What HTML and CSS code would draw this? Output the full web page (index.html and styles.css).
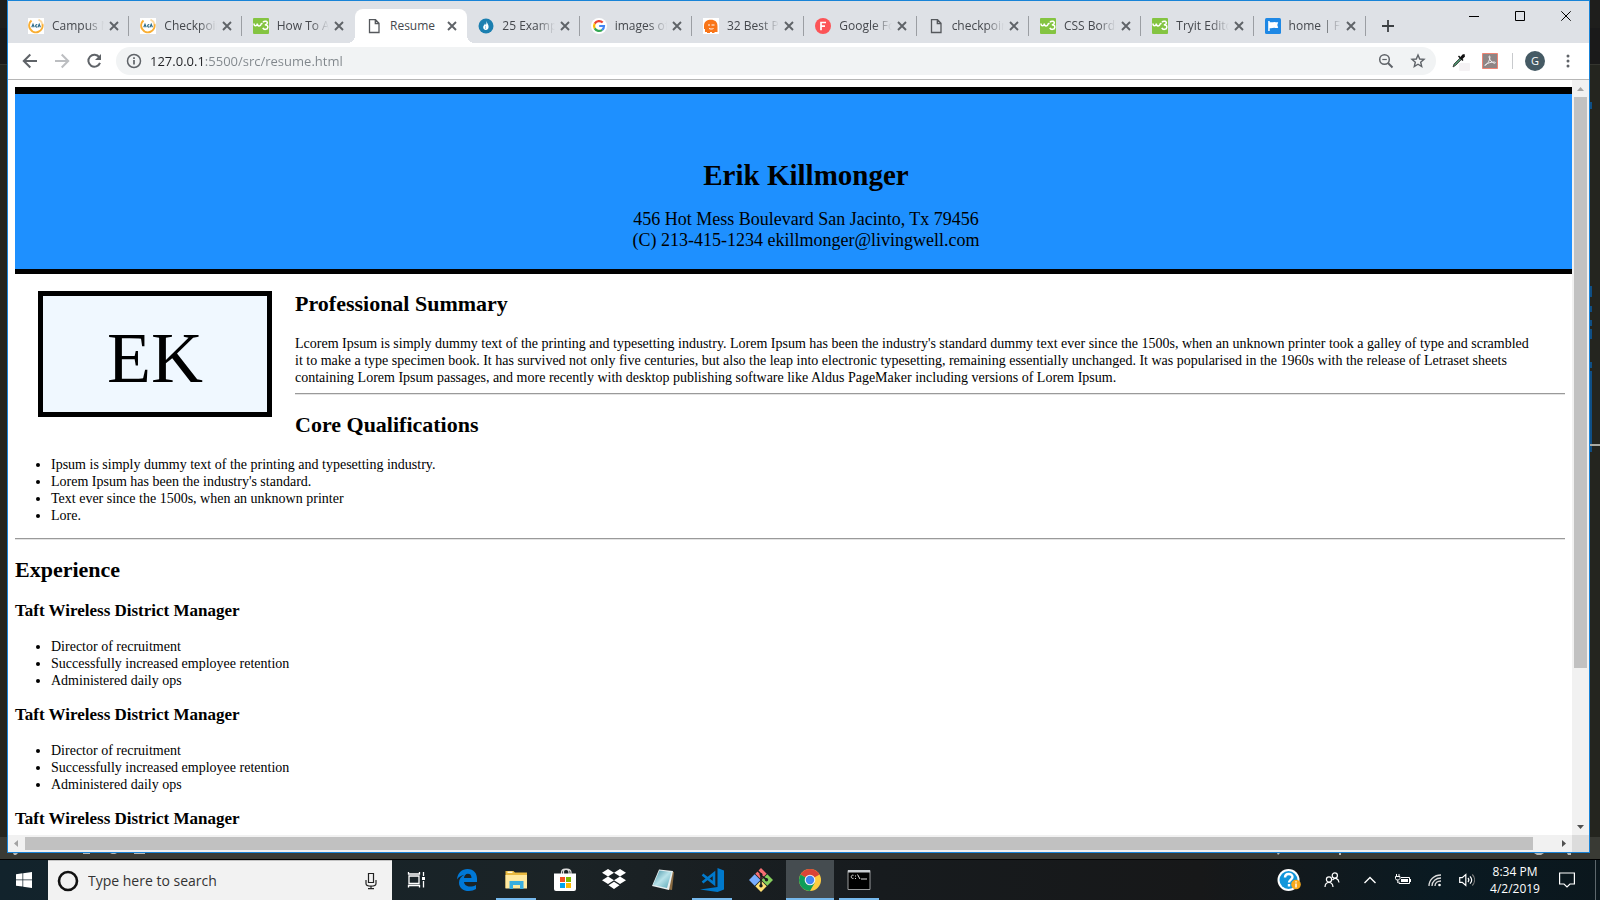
FILE: index.html
```html
<!DOCTYPE html>
<html lang="en">
<head>
<meta charset="utf-8">
<title>Resume</title>
<link rel="stylesheet" href="styles.css">
</head>
<body>
<svg class="defs" aria-hidden="true">
  <symbol id="x" viewBox="0 0 10 10"><path d="M1 1l8 8M9 1l-8 8" stroke="#5f6368" stroke-width="1.9"/></symbol>
  <symbol id="doc" viewBox="0 0 16 16"><path d="M3.5 1.7h6l3.5 3.6v9.2h-9.500zM9.300 1.700v3.800h3.700" fill="none" stroke="#55585c" stroke-width="1.300"/></symbol>
  <symbol id="aca" viewBox="0 0 16 16"><path d="M0 0h16v16H0z" fill="#fff"/><path d="M3.500 2.500a6.700 6.700 0 1 0 10.900 3.500" fill="none" stroke="#f9ae33" stroke-width="2"/><path d="M10.500 1.700a6.700 6.700 0 0 1 3.900 4.500" fill="none" stroke="#fcd9a0" stroke-width="1.800"/><path d="M3.800 9.300l1.200-3 1.200 3M9.300 6.700c-2.200-.7-2.200 3 0 2.300M10 9.300l1.200-3 1.200 3" fill="none" stroke="#2b6c8a" stroke-width="1.200"/></symbol>
  <symbol id="w3" viewBox="0 0 16 16"><rect width="16" height="16" rx="1" fill="#84c441"/><path d="M1 5.500c0 3 3 3 3.300 0 0 3 3.300 3.300 4 .2l1.200-.5M10 4.300c1.500-2 4.800-1 4.300.9-.2 1.300-1.500 1.500-2.500 1.500 2 0 3.200.8 3 2.600-.3 2.500-4 2.800-5 .6" fill="none" stroke="#fff" stroke-width="1.500"/></symbol>
</svg>
<div class="desktop">
  <i class="mark m1"></i><i class="mark m2"></i><i class="mark m3"></i><i class="rule"></i>
  <div class="window">
    <div class="strip">
      <nav class="tabs">
        <div class="tab"><svg class="fav"><use href="#aca"/></svg><a href="#">Campus Ma</a><button aria-label="Close"><svg><use href="#x"/></svg></button></div>
        <div class="tab"><svg class="fav"><use href="#aca"/></svg><a href="#">Checkpoint</a><button aria-label="Close"><svg><use href="#x"/></svg></button></div>
        <div class="tab bare"><svg class="fav"><use href="#w3"/></svg><a href="#">How To Add</a><button aria-label="Close"><svg><use href="#x"/></svg></button></div>
        <div class="tab active"><svg class="fav"><use href="#doc"/></svg><a href="#">Resume</a><button aria-label="Close"><svg><use href="#x"/></svg></button></div>
        <div class="tab"><svg class="fav" viewBox="0 0 16 16"><circle cx="8" cy="8" r="7.500" fill="#1b7fb0"/><path d="M8.300 2.800c.3 2.200 2.500 3.800 2.300 6.200-.1 1.800-1.300 3-2.700 3-1.700 0-2.800-1.200-2.700-2.900.1-1.500 1.500-2 1.700-3.500.8.500.9 1.300.8 2 .8-1.400.9-3 .6-4.800z" fill="#fff"/><path d="M7.500 8v3" stroke="#9fd0e8"/></svg><a href="#">25 Examples</a><button aria-label="Close"><svg><use href="#x"/></svg></button></div>
        <div class="tab"><svg class="fav" viewBox="0 0 16 16"><circle cx="8" cy="8" r="8" fill="#fff"/><g fill="none" stroke-width="2.200"><path d="M11.700 4.600A5 5 0 0 0 3.700 5.600" stroke="#ea4335"/><path d="M3.700 5.600a5 5 0 0 0 0 4.800" stroke="#fbbc05"/><path d="M3.700 10.400a5 5 0 0 0 7.500 1.400" stroke="#34a853"/><path d="M11.200 11.800A5 5 0 0 0 13 8H8.200" stroke="#4285f4"/></g></svg><a href="#">images of</a><button aria-label="Close"><svg><use href="#x"/></svg></button></div>
        <div class="tab"><svg class="fav" viewBox="0 0 16 16"><path d="M0 0h16v16H0z" fill="#fff"/><path d="M1 8C1 3.500 4 1.800 8 1.800S14.500 4 14.500 8v6h-3v1H9v-1H7v1H4v-1H2v-3H1z" fill="#f97518"/><path d="M5 7h2M8.500 7h3M6 10.500c1.500.7 3 .7 4.500 0" stroke="#fff" fill="none"/></svg><a href="#">32 Best Po</a><button aria-label="Close"><svg><use href="#x"/></svg></button></div>
        <div class="tab"><svg class="fav" viewBox="0 0 16 16"><circle cx="8" cy="8" r="8" fill="#fc5457"/><path d="M6 12.200V4.500h5M6 8.200h4" fill="none" stroke="#fff" stroke-width="1.700"/></svg><a href="#">Google Fo</a><button aria-label="Close"><svg><use href="#x"/></svg></button></div>
        <div class="tab"><svg class="fav"><use href="#doc"/></svg><a href="#">checkpoint</a><button aria-label="Close"><svg><use href="#x"/></svg></button></div>
        <div class="tab"><svg class="fav"><use href="#w3"/></svg><a href="#">CSS Border</a><button aria-label="Close"><svg><use href="#x"/></svg></button></div>
        <div class="tab"><svg class="fav"><use href="#w3"/></svg><a href="#">Tryit Editor</a><button aria-label="Close"><svg><use href="#x"/></svg></button></div>
        <div class="tab"><svg class="fav" viewBox="0 0 16 16"><rect width="16" height="16" rx="1.500" fill="#1e88e5"/><path d="M3.200 3h1.500v10H3.200zM4.500 4c2 .8 3.500 0 5 0 1.300 0 2.200.5 3.700.2L12.300 7l.9 2.800c-2 .6-2.500 0-4 0s-2.700.7-4.700.2z" fill="#fff"/></svg><a href="#">home | Font</a><button aria-label="Close"><svg><use href="#x"/></svg></button></div>
      </nav>
      <button class="plus" aria-label="New tab"><svg viewBox="0 0 12 12" width="12" height="12"><path d="M6 0v12M0 6h12" stroke="#3c4043" stroke-width="1.800"/></svg></button>
      <div class="controls">
        <button aria-label="Minimize"><svg viewBox="0 0 10 10"><path d="M0 5.500h10" stroke="#000"/></svg></button>
        <button aria-label="Maximize"><svg viewBox="0 0 10 10"><path d="M.5 .5h9v9h-9z" fill="none" stroke="#000"/></svg></button>
        <button aria-label="Close window"><svg viewBox="0 0 10 10"><path d="M.3 .3l9.400 9.400M9.700 .3L.3 9.700" stroke="#000"/></svg></button>
      </div>
    </div>
    <div class="toolbar">
      <button class="nav" aria-label="Back"><svg viewBox="0 0 16 16"><path d="M15 8H2.500M8.300 1.500L1.800 8l6.500 6.500" fill="none" stroke="#5f6368" stroke-width="2"/></svg></button>
      <button class="nav" aria-label="Forward"><svg viewBox="0 0 16 16"><path d="M1 8h12.500M7.700 1.500L14.200 8l-6.500 6.500" fill="none" stroke="#bcbec1" stroke-width="2"/></svg></button>
      <button class="nav" aria-label="Reload"><svg viewBox="0 0 16 16"><path d="M13.300 4.300A6 6 0 1 0 14 9.800" fill="none" stroke="#5f6368" stroke-width="2"/><path d="M15 1v6H9z" fill="#5f6368"/></svg></button>
      <div class="omnibox">
        <svg viewBox="0 0 16 16"><circle cx="8" cy="8" r="6.500" fill="none" stroke="#5f6368" stroke-width="1.500"/><path d="M8 7v4.500M8 4.300V6" stroke="#5f6368" stroke-width="1.700"/></svg>
        <input type="text" aria-label="Address" value="127.0.0.1:5500/src/resume.html">
        <button aria-label="Zoom"><svg viewBox="0 0 16 16"><circle cx="6.500" cy="6.500" r="4.800" fill="none" stroke="#5f6368" stroke-width="1.500"/><path d="M10 10l4.500 4.500" stroke="#5f6368" stroke-width="1.900"/><path d="M4.300 6.500h4.500" stroke="#5f6368" stroke-width="1.200"/></svg></button>
        <button aria-label="Bookmark"><svg viewBox="0 0 16 16"><path d="M8 2l1.700 4 4.300.4-3.300 2.800 1 4.300L8 11.200l-3.700 2.300 1-4.300L2 6.400 6.300 6z" fill="none" stroke="#5f6368" stroke-width="1.400"/></svg></button>
      </div>
      <button class="ext" aria-label="Color picker"><svg viewBox="0 0 20 20"><rect x="9" y="12" width="11" height="8" rx="1" fill="#f5f2f4"/><path d="M3 16l1-3 6-6 1.500 1.500-6 6z" fill="#4c8f6b" stroke="#333" stroke-width=".8"/><path d="M8.500 5l4.500 4.500" stroke="#111" stroke-width="1.500"/><path d="M10 6.500l2.500-3 2-.5.500 2.500-3 3z" fill="#111"/></svg></button>
      <button class="ext" aria-label="Acrobat"><svg viewBox="0 0 16 16"><path d="M.5 .5h15v15H.5z" fill="#8e8585" stroke="#ee8473"/><path d="M3 12.500c2-.8 4.700-4.500 5-8.500 0-1.500-1.300-1.200-1 0 .5 3 3 5.700 5.500 6.300 1.200 0 1.200-1.200 0-1.300-3 0-6.500.8-9 2.500-.7.500-1 .9-.5 1z" fill="none" stroke="#eee"/></svg></button>
      <span class="sep"></span>
      <button class="avatar" aria-label="Profile">G</button>
      <button class="dots" aria-label="Menu"><svg viewBox="0 0 4 14"><circle cx="2" cy="2" r="1.500"/><circle cx="2" cy="7" r="1.500"/><circle cx="2" cy="12" r="1.500"/></svg></button>
    </div>
    <div class="view">
      <div class="page">
        <header class="head">
          <h1>Erik Killmonger</h1>
          <p>456 Hot Mess Boulevard San Jacinto, Tx 79456<br>(C) 213-415-1234 ekillmonger@livingwell.com</p>
        </header>
        <main class="resume">
          <div class="mono">EK</div>
          <h2>Professional Summary</h2>
          <p>Lcorem Ipsum is simply dummy text of the printing and typesetting industry. Lorem Ipsum has been the industry's standard dummy text ever since the 1500s, when an unknown printer took a galley of type and scrambled<br> it to make a type specimen book. It has survived not only five centuries, but also the leap into electronic typesetting, remaining essentially unchanged. It was popularised in the 1960s with the release of Letraset sheets<br> containing Lorem Ipsum passages, and more recently with desktop publishing software like Aldus PageMaker including versions of Lorem Ipsum.</p>
          <hr>
          <h2>Core Qualifications</h2>
          <ul class="core">
            <li>Ipsum is simply dummy text of the printing and typesetting industry.</li>
            <li>Lorem Ipsum has been the industry's standard.</li>
            <li>Text ever since the 1500s, when an unknown printer</li>
            <li>Lore.</li>
          </ul>
          <hr>
          <h2>Experience</h2>
          <h3>Taft Wireless District Manager</h3>
          <ul><li>Director of recruitment</li><li>Successfully increased employee retention</li><li>Administered daily ops</li></ul>
          <h3>Taft Wireless District Manager</h3>
          <ul><li>Director of recruitment</li><li>Successfully increased employee retention</li><li>Administered daily ops</li></ul>
          <h3>Taft Wireless District Manager</h3>
        </main>
      </div>
      <div class="vbar"><svg viewBox="0 0 17 17"><path d="M5 11l3.500-4 3.500 4z" fill="#a3a3a3"/></svg><i></i><svg viewBox="0 0 17 17"><path d="M5 7h7l-3.500 4z" fill="#505050"/></svg></div>
      <div class="hbar"><svg viewBox="0 0 17 17"><path d="M10 5v7L6 8.500z" fill="#a3a3a3"/></svg><i></i><svg viewBox="0 0 17 17"><path d="M7 5v7l4-3.500z" fill="#505050"/></svg></div>
      <div class="corner"></div>
    </div>
  </div>
  <svg class="peek" viewBox="0 0 160 2"><g fill="#b8b9b5"><path d="M13 0h5l-2 2h-2zM83 0h7v1h-7zM110 0h7l-2 1h-3zM134 0h11v1h-11z"/></g></svg>
  <svg class="peek right" viewBox="0 0 330 2"><g fill="#b8b9b5"><path d="M7 0h3l-2 2zM69 0h2v2h-2zM264 0h10l-3 2h-4zM297 0h4v2h-3z"/></g></svg>
</div>
<footer class="taskbar">
  <button class="start" aria-label="Start"><svg viewBox="0 0 16 16"><path d="M0 2.200l6.500-.9v6.200H0zM7.200 1.200L16 0v7.500H7.200zM0 8.300h6.500v6.300L0 13.700zM7.200 8.300H16V16l-8.800-1.200z" fill="#fff"/></svg></button>
  <div class="search">
    <svg viewBox="0 0 22 22" width="22" height="22"><circle cx="11" cy="11" r="9" fill="none" stroke="#111" stroke-width="2.600"/></svg>
    <input type="text" aria-label="Search" placeholder="Type here to search">
    <svg viewBox="0 0 12 18" width="12" height="18"><path d="M3.500 1.500h5v9h-5zM1 8v3.500c0 3.500 10 3.500 10 0V8M6 14v2.500M3 16.700h6" fill="none" stroke="#222" stroke-width="1.200"/></svg>
  </div>
  <div class="apps">
    <button class="tv" aria-label="Task view"><svg viewBox="0 0 24 24" fill="none" stroke="#fff" stroke-width="1.300"><path d="M4 8h10v7.500H4zM3.500 4v2h11V4M3.500 19.500v-2h11v2M18.500 4v4M18.500 13v6.500"/><path d="M17 9h3v3h-3z" fill="#fff" stroke="none"/></svg></button>
    <button aria-label="Edge"><svg viewBox="0 0 24 24"><path d="M2 11.500C2.500 5 7 1 12.500 1 19 1 22 5.500 22 10.500V14H9c.3 3 3 4.500 6 4.500 2.300 0 4.200-.6 6-1.600v4.200c-2 1.200-4.300 1.900-7 1.900C8 23 4 19.500 4 14.700c0-3.400 2-6.400 5.300-7.900C6 7.500 3.600 9 2 11.500zM9 10h7.500c0-2.700-1.300-4.200-3.600-4.200C10.700 5.800 9.300 7.600 9 10z" fill="#0078d7"/></svg></button>
    <button class="open" aria-label="File Explorer"><svg viewBox="0 0 24 24"><path d="M1.500 3h8l1.500 1.500h12V20h-21.500z" fill="#e9b93f"/><path d="M1.500 7h21.500v13.500H1.500z" fill="#ffe9a0"/><path d="M3.500 3.500h5V5h-5z" fill="#fff5d0"/><path d="M5.500 21v-8h14v8h-3.500v-4H9v4z" fill="#3aaee0"/></svg></button>
    <button aria-label="Store"><svg viewBox="0 0 24 24"><path d="M8.500 6V4.500C8.500 0 16 0 16 4.500V6M10.500 6V3.500c0-3.300 7-3.300 7.500.5V6" fill="none" stroke="#ddd" stroke-width="1.200"/><path d="M1 5.500h22V21a2 2 0 0 1-2 2H3a2 2 0 0 1-2-2z" fill="#fff"/><path d="M7 9h5v5H7z" fill="#f25022"/><path d="M13 9h5v5h-5z" fill="#7fba00"/><path d="M7 15h5v5H7z" fill="#00a4ef"/><path d="M13 15h5v5h-5z" fill="#ffb900"/></svg></button>
    <button aria-label="Dropbox"><svg viewBox="0 0 24 24"><path d="M6 1l6 3.700-6 3.700L0 4.700zM18 1l6 3.700-6 3.700-6-3.700zM6 8.500l6 3.700-6 3.700-6-3.700zM18 8.500l6 3.700-6 3.700-6-3.700zM12 13.800l5.500 3.400-5.500 3.800-5.500-3.800z" fill="#fff"/></svg></button>
    <button aria-label="Notepad"><svg viewBox="0 0 24 24"><defs><linearGradient id="np" x1="0" y1="0" x2="1" y2="1"><stop offset="0" stop-color="#3f8da0"/><stop offset=".5" stop-color="#b9e3ea"/><stop offset="1" stop-color="#54a3b3"/></linearGradient></defs><path d="M19 3l4 1-2 18-7-1z" fill="#8a6b42"/><path d="M8 1.500L22 3l-4 19L1 18z" fill="#e9eff0"/><path d="M8.500 2.500L20.500 4l-4.500 16L2 17z" fill="url(#np)"/></svg></button>
    <button class="open" aria-label="VS Code"><svg viewBox="0 0 24 24"><path d="M17.500 0L24 2.500v19L17.500 24 0 21.500l17.500-2.400z" fill="#0079cc"/><path d="M2.500 6.500l11.500 9V5.500l-11.500 9" fill="none" stroke="#0079cc" stroke-width="2.600"/></svg></button>
    <button aria-label="Git"><svg viewBox="0 0 24 24"><path d="M12 0l5.700 5.700L12 11.400 6.300 5.700z" fill="#f76f72"/><path d="M18.300 6.300L24 12l-5.700 5.700-5.700-5.700z" fill="#86cf5d"/><path d="M12 12.600l5.700 5.700L12 24l-5.700-5.700z" fill="#ffe074"/><path d="M5.700 6.300l5.700 5.700-5.700 5.700L0 12z" fill="#78adff"/><path d="M8.500 2.500L12 6v12M12 7.500l5.500 4" stroke="#191c1e" stroke-width="1.600" fill="none"/><g fill="#191c1e"><circle cx="12" cy="6.500" r="1.500"/><circle cx="17.500" cy="11.700" r="1.700"/><circle cx="12" cy="17.800" r="1.700"/></g></svg></button>
    <button class="current" aria-label="Chrome"><svg viewBox="0 0 24 24"><circle cx="12" cy="12" r="11" fill="#ffcd40"/><path d="M12 12L2.500 6.500a11 11 0 0 1 19 0z" fill="#db4437"/><path d="M2.500 6.500L12 12l4.700 2.800L12 23A11 11 0 0 1 2.500 6.500z" fill="#0f9d58"/><circle cx="12" cy="12" r="5.300" fill="#f3f3f3"/><circle cx="12" cy="12" r="4.200" fill="#4285f4"/></svg></button>
    <button class="open" aria-label="Command Prompt"><svg viewBox="0 0 24 24"><path d="M1 2.500h22v19H1z" fill="#000" stroke="#9a9c9d"/><path d="M1 2h22v2.500H1z" fill="#c9cdd1"/><path d="M6.500 7.300c-3-1-3 4 0 3M8.500 7.500v1M8.500 10v1M10.500 6.500l2.500 4.500M14 11h6" stroke="#ddd" fill="none"/></svg></button>
  </div>
  <div class="tray">
    <button class="help" aria-label="Help"><svg viewBox="0 0 24 24"><circle cx="11.500" cy="12" r="11" fill="#fff"/><circle cx="11.500" cy="12" r="9" fill="#1296db"/><path d="M8 9.500c0-4.500 7.500-4.500 7.500-.5 0 2.500-3.500 2.700-3.500 5.500M12 16v2.500" fill="none" stroke="#fff" stroke-width="2.400"/><circle cx="19" cy="16.500" r="4.800" fill="#f7a81b"/><path d="M19 13.300v1.300M19 15.500v4" stroke="#fff" stroke-width="1.400"/></svg></button>
    <button class="people" aria-label="People"><svg viewBox="0 0 16 16" fill="none" stroke="#fff" stroke-width="1.200"><circle cx="5" cy="7.500" r="2.600"/><path d="M1 15c.3-6 7.500-6 8 0"/><circle cx="10.800" cy="3.500" r="2.600"/><path d="M8.500 8c2.500-3 6-1.500 6.500 2.500"/></svg></button>
    <button class="up" aria-label="Show hidden icons"><svg viewBox="0 0 16 16"><path d="M2.500 11L8 5.500l5.500 5.500" fill="none" stroke="#fff" stroke-width="1.400"/></svg></button>
    <button aria-label="Battery"><svg viewBox="0 0 16 16"><path d="M6 5.500h8.500v6H4V9.500" fill="none" stroke="#fff"/><path d="M6 7h7v3H6zM15 7h1v3h-1z" fill="#fff"/><path d="M1.500 2v2M4 2v2M.5 4.500h4.500v2L3.500 8h-2L.5 6.500zM2.800 8v3" fill="none" stroke="#fff"/></svg></button>
    <button aria-label="Wi-Fi"><svg viewBox="0 0 16 16" fill="none" stroke="#ddd" stroke-width="1.300"><path d="M2 14C2 8 7 3 14 3M5 14c0-4.500 4-8 9-8M8 14c0-3 2.500-5 6-5"/><circle cx="12.500" cy="13" r="1.300" fill="#fff" stroke="none"/></svg></button>
    <button aria-label="Volume"><svg viewBox="0 0 16 16" fill="none" stroke="#fff" stroke-width="1.200"><path d="M.7 5.700h2.500l3.600-3.200v11L3.200 10.300H.7zM9 6c1 1.200 1 2.800 0 4M11 4.300c2 2.200 2 5.200 0 7.400"/><path d="M13.300 2.500c3 3.300 3 7.700 0 11" stroke="#777"/></svg></button>
    <div class="clock"><span>8:34 PM</span><span>4/2/2019</span></div>
    <button class="note" aria-label="Notifications"><svg viewBox="0 0 16 16"><path d="M.6 1h14.800v11H11l-3 3-3-3H.6z" fill="none" stroke="#fff" stroke-width="1.200"/></svg></button>
    <span class="show"></span>
  </div>
</footer>
</body>
</html>
```

FILE: styles.css
```css
* { box-sizing: border-box; }
body { margin: 0; height: 100vh; display: flex; flex-direction: column; overflow: hidden; font-family: "Open Sans", "Noto Sans", sans-serif; }
button { border: 0; padding: 0; background: none; display: flex; align-items: center; justify-content: center; font: inherit; flex: none; }
input { border: 0; padding: 0; outline: 0; background: none; font: inherit; min-width: 0; }
a { color: inherit; text-decoration: none; }
svg { display: block; flex: none; }
.defs { position: absolute; width: 0; height: 0; }

/* desktop behind the browser */
.desktop { position: relative; flex: 1; min-height: 0; display: flex; padding: 0 10px 6px 7px; border-bottom: 1px solid #000; background: linear-gradient(#1e1e1c 0 28px, #1a1a1a 28px 64px, #34352f 64px 65px, #24251f 65px calc(100% - 22px), #393a34 calc(100% - 22px)); }
.mark { position: absolute; right: 8px; width: 2px; background: #0f4f85; }
.m1 { top: 102px; height: 7px; }
.m2 { top: 286px; height: 53px; background: linear-gradient(#0f4f85 0 11px, transparent 11px 20px, #0f4f85 20px 26px, transparent 26px 34px, #0f4f85 34px 40px, transparent 40px 43px, #0f4f85 43px); }
.m3 { top: 362px; height: 90px; background: linear-gradient(#0f4f85 0 6px, transparent 6px 9px, #0f4f85 9px); }
.rule { position: absolute; right: 0; top: 444px; width: 10px; height: 2px; background: #a9aaa3; }
.peek { position: absolute; left: 0; bottom: 4px; width: 160px; height: 2px; }
.peek.right { left: auto; right: 0; width: 330px; overflow: hidden; }

/* window */
.window { flex: 1; min-width: 0; display: flex; flex-direction: column; border: 1px solid #1883d7; background: #fff; }
.strip { height: 42px; flex: none; display: flex; padding-left: 9px; background: #dee1e6; color: #45484d; }
.tabs { flex: 1; min-width: 0; display: flex; }
.tab { position: relative; flex: 1 1 0; min-width: 0; margin-top: 8px; display: flex; align-items: center; gap: 8px; padding: 0 10px 0 11px; font-size: 12px; line-height: 16px; }
.tab::after { content: ""; position: absolute; right: 0; top: 7px; width: 1px; height: 20px; background: #9b9ea3; }
.tab.bare::after { display: none; }
.tab .fav { width: 16px; height: 16px; }
.tab a { flex: 1; min-width: 0; margin-right: -3px; overflow: hidden; white-space: nowrap; -webkit-mask-image: linear-gradient(90deg, #000 calc(100% - 18px), transparent); mask-image: linear-gradient(90deg, #000 calc(100% - 18px), transparent); }
.tab button svg { width: 10px; height: 10px; }
.tab.active { flex-basis: 2px; margin-left: 1px; background: #fff; border-radius: 8px 8px 0 0; }
.tab.active a { -webkit-mask-image: none; mask-image: none; }
.tab.active::before, .tab.active::after { content: ""; position: absolute; top: auto; bottom: 0; width: 8px; height: 8px; background: radial-gradient(circle at 0 0, transparent 8px, #fff 8px); }
.tab.active::before { left: -8px; }
.tab.active::after { right: -8px; background: radial-gradient(circle at 100% 0, transparent 8px, #fff 8px); }
.plus { width: 44px; padding-top: 8px; }
.controls { margin-left: 41px; display: flex; height: 29px; }
.controls button { width: 46px; }
.controls svg { width: 10px; height: 10px; }
.toolbar { height: 37px; flex: none; display: flex; align-items: center; padding: 0 19px 0 6px; border-bottom: 1px solid #b6b6b6; }
.nav { width: 32px; }
.nav svg { width: 16px; height: 16px; }
.omnibox { flex: 1; min-width: 0; height: 28px; margin: 0 14px 0 6px; display: flex; align-items: center; padding: 0 10px; border-radius: 14px; background: #f1f3f4; }
.omnibox svg { width: 16px; height: 16px; }
.omnibox input { flex: 1; margin-left: 8px; font-size: 13px; line-height: 20px; color: #202124; background: linear-gradient(90deg, #202124 54px, #80868b 54px); -webkit-background-clip: text; background-clip: text; -webkit-text-fill-color: transparent; }
.omnibox button { margin-left: 16px; }
.ext { width: 20px; margin-right: 6px; }
.ext svg { width: 20px; height: 20px; }
.ext + .ext { width: 16px; margin: 0 14px 0 6px; }
.ext + .ext svg { width: 16px; height: 16px; }
.sep { width: 1px; height: 16px; background: #c8cacd; }
.avatar { width: 20px; height: 20px; margin: 0 21px 0 12px; border-radius: 50%; background: #455a64; color: #fff; font-size: 11px; line-height: 14px; }
.dots svg { width: 4px; height: 14px; fill: #5f6368; }

/* scrolling view */
.view { flex: 1; min-height: 0; display: grid; grid-template-columns: minmax(0, 1fr) 17px; grid-template-rows: minmax(0, 1fr) 17px; }
.vbar, .hbar { display: flex; background: #f1f1f1; }
.vbar { flex-direction: column; align-items: center; }
.hbar { align-items: center; }
.vbar svg, .hbar svg { width: 17px; height: 17px; }
.vbar i { width: 13px; height: 75.6%; background: #c1c1c1; }
.vbar svg:last-child { margin-top: auto; }
.hbar i { width: 96.4%; height: 13px; background: #c1c1c1; }
.hbar svg:last-child { margin-left: auto; }
.corner { background: #dcdcdc; }

/* resume */
.page { overflow: hidden; padding: 7px; color: #000; font-family: "Liberation Serif", "Times New Roman", serif; font-size: 14px; line-height: 17px; }
.head { width: calc(100% + 32px); padding: 64px 0 18px; text-align: center; background: #1e90ff; border: solid #000; border-width: 7px 0 5px; }
.head h1 { margin: 0 0 16px; font-size: 29px; line-height: 35px; }
.head p { margin: 0; font-size: 18px; line-height: 21px; }
.resume { display: flow-root; }
.mono { float: left; width: 234px; height: 126px; margin: 17px 23px 22px; border: 5px solid #000; background: #f0f8ff; font-size: 72px; line-height: 124px; text-align: center; }
.resume h2 { margin: 18px 0 20px; font-size: 22px; line-height: 23px; }
.resume h3 { margin: 16px 0 18px; font-size: 17px; line-height: 19px; }
.resume p { margin: 0 0 7px; }
.resume ul { margin: 16px 0; padding-left: 36px; }
.resume .core { margin: 20px 0 14px; }
.resume h2 + h3 { margin-top: 18px; }
.resume hr { height: 2px; margin: 0; border: solid #e4e4e4; border-width: 1px 0; border-top-color: #9a9a9a; }

/* taskbar */
.taskbar { height: 40px; flex: none; display: flex; background: linear-gradient(90deg, #12232c, #1b2326 35%, #171b1e 55%, #171819 75%, #0a1a22 90%, #0b171d); color: #fff; }
.start { width: 48px; }
.start svg { width: 16px; height: 16px; }
.search { width: 344px; display: flex; align-items: center; padding: 0 15px 0 9px; background: #f2f2f2; border-top: 1px solid #c4c4c4; }
.search input { flex: 1; margin-left: 9px; font-size: 14px; line-height: 20px; color: #333; }
.search input::placeholder { color: #333; opacity: 1; }
.apps { display: flex; gap: 1px; }
.apps button { width: 48px; border: solid transparent; border-width: 2px 0; }
.apps .tv { width: 50px; }
.apps svg { width: 24px; height: 24px; }
.apps .open { background: linear-gradient(#76b9ed, #76b9ed) center bottom / 40px 2px no-repeat border-box; }
.apps .current { background: #454c50; border-bottom-color: #76b9ed; }
.tray { margin-left: auto; display: flex; align-items: center; }
.tray button { width: 32px; height: 40px; }
.tray svg { width: 16px; height: 16px; }
.tray .help { width: 44px; }
.tray .help svg { width: 24px; height: 24px; }
.tray .people { width: 42px; }
.tray .up { width: 34px; }
.clock { width: 64px; display: flex; flex-direction: column; align-items: center; font-size: 12px; line-height: 17px; }
.tray .note { width: 40px; margin-right: 8px; }
.show { width: 5px; height: 40px; border-left: 1px solid #5d676c; }
```
